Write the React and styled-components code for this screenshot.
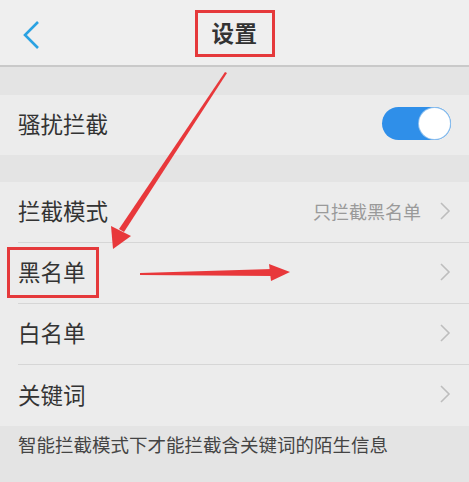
import styled, { createGlobalStyle } from 'styled-components';

const GlobalStyle = createGlobalStyle`
  html, body {
    margin: 0;
    padding: 0;
    background: #e4e4e4;
  }
  body {
    font-family: "Noto Sans CJK SC", "Noto Sans", sans-serif;
  }
`;

const Page = styled.div`
  position: relative;
  width: 469px;
  height: 482px;
  overflow: hidden;
  background: #e4e4e4;
`;

const Header = styled.div`
  height: 65px;
  background: #efefef;
  border-bottom: 2px solid #c9c9c9;
  display: flex;
  align-items: center;
  justify-content: center;
  position: relative;
`;

const BackButton = styled.div`
  position: absolute;
  left: 18px;
  top: 18px;
  width: 26px;
  height: 34px;
  display: flex;
  align-items: center;
  justify-content: center;
`;

const TitleBox = styled.div`
  width: 74px;
  height: 41px;
  margin-top: 2px;
  border: 3px solid #e5393b;
  display: flex;
  align-items: center;
  justify-content: center;
  font-size: 22.5px;
  font-weight: 700;
  color: #333;
  letter-spacing: 0.5px;
  padding-bottom: 3px;
  box-sizing: content-box;
  height: 38px;
`;

const Gap = styled.div`
  height: ${(p) => p.h}px;
  background: #e4e4e4;
`;

const Group = styled.div`
  background: #ececec;
`;

const Row = styled.div`
  height: ${(p) => p.h || 61}px;
  box-sizing: border-box;
  display: flex;
  align-items: center;
  margin-left: 18px;
  padding-right: 18px;
  padding-bottom: 3px;
  border-bottom: ${(p) => (p.divider ? '1px solid #d6d6d6' : 'none')};
`;

const Label = styled.span`
  position: relative;
  font-size: 22.5px;
  color: #333;
  flex: 1;
  line-height: 1;
`;

const Highlight = styled.span`
  position: relative;
  display: inline-block;

  &::after {
    content: '';
    position: absolute;
    left: -11px;
    right: -13px;
    top: -13px;
    bottom: -15px;
    border: 3px solid #e5393b;
  }
`;

const Value = styled.span`
  font-size: 18px;
  color: #9a9a9a;
  margin-right: 18px;
`;

const Toggle = styled.div`
  width: 69px;
  height: 33px;
  border-radius: 17px;
  background: #2f8fe9;
  box-sizing: border-box;
  padding: 1px 1px 1px 0;
  display: flex;
  justify-content: flex-end;
  align-items: center;
`;

const Knob = styled.div`
  width: 31px;
  height: 31px;
  border-radius: 50%;
  background: #fff;
  box-shadow: 0 0 0 1px #8fc0ee;
`;

const Footer = styled.div`
  height: 57px;
  background: #e4e4e4;
  padding: 5px 18px 0;
  font-size: 18.5px;
  color: #444;
  box-sizing: border-box;
`;

const Arrows = styled.svg`
  position: absolute;
  left: 0;
  top: 0;
  pointer-events: none;
`;

function Chevron() {
  return (
    <svg width="12" height="18" viewBox="0 0 12 18">
      <polyline points="2,1 10,9 2,17" fill="none" stroke="#bdbdbd" strokeWidth="1.6" />
    </svg>
  );
}

function App() {
  return (
    <>
      <GlobalStyle />
      <Page>
        <Header>
          <BackButton>
            <svg width="20" height="30" viewBox="0 0 20 30">
              <polyline points="17,2 4,15 17,28" fill="none" stroke="#2aa2e2" strokeWidth="2.6" />
            </svg>
          </BackButton>
          <TitleBox>设置</TitleBox>
        </Header>
        <Gap h={28} />
        <Group>
          <Row h={60}>
            <Label>骚扰拦截</Label>
            <Toggle>
              <Knob />
            </Toggle>
          </Row>
        </Group>
        <Gap h={27} />
        <Group>
          <Row divider>
            <Label>拦截模式</Label>
            <Value>只拦截黑名单</Value>
            <Chevron />
          </Row>
          <Row divider>
            <Label>
              <Highlight>黑名单</Highlight>
            </Label>
            <Chevron />
          </Row>
          <Row divider>
            <Label>白名单</Label>
            <Chevron />
          </Row>
          <Row>
            <Label>关键词</Label>
            <Chevron />
          </Row>
        </Group>
        <Footer>智能拦截模式下才能拦截含关键词的陌生信息</Footer>
        <Arrows width="469" height="482" viewBox="0 0 469 482">
          <polygon points="225,72 227,73 124,232 119,229" fill="#e8383b" />
          <polygon points="113,249 111,226 131,236" fill="#e8383b" />
          <polygon points="140,275 140,273 272,269 272,276" fill="#e8383b" />
          <polygon points="290,272 269,264 271,281" fill="#e8383b" />
        </Arrows>
      </Page>
    </>
  );
}

export default App;
